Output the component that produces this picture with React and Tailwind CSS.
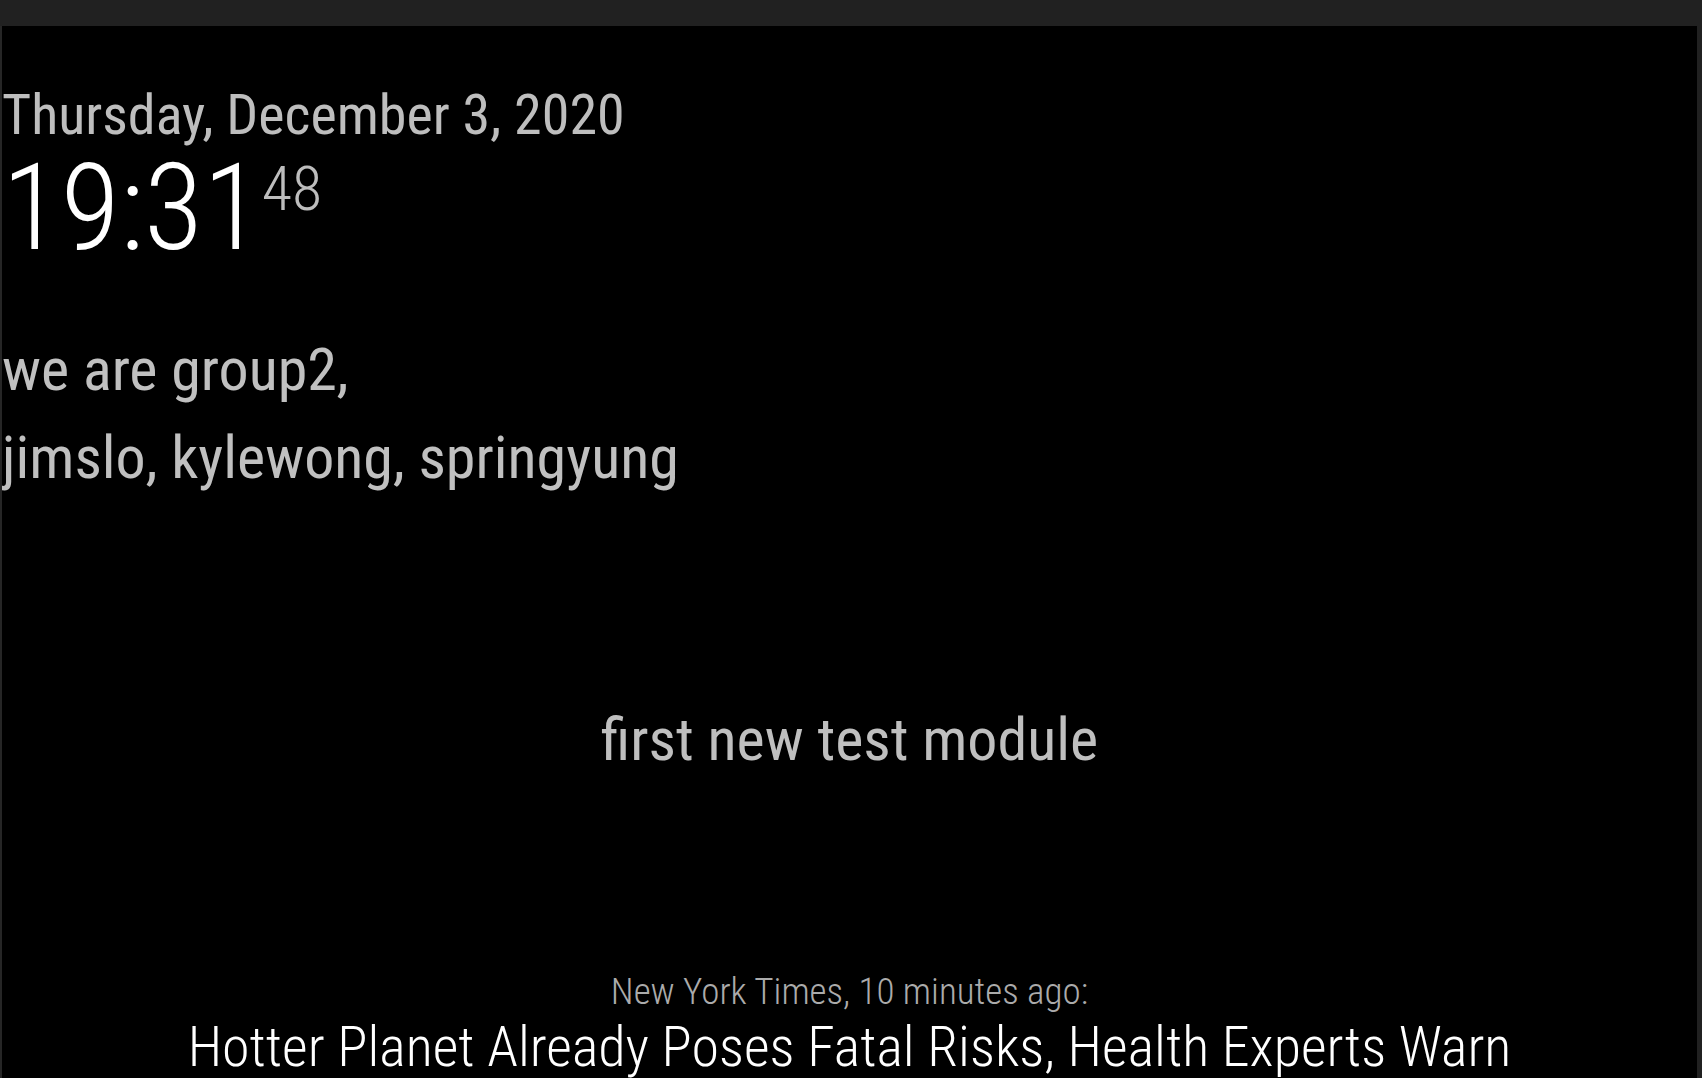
const font = { fontFamily: "'Roboto Condensed', Roboto, sans-serif" };

function Clock() {
  return (
    <div>
      <div className="text-[56px] leading-[65px] text-[#bebebe] whitespace-nowrap">Thursday, December 3, 2020</div>
      <div className="flex items-start whitespace-nowrap">
        <span className="text-[121px] leading-[121px] font-light text-white">19:31</span>
        <span className="mt-[10px] text-[62px] leading-[62px] font-light text-[#bdbdbd]">48</span>
      </div>
    </div>
  );
}

function HelloGroup() {
  return (
    <div className="mt-[57px] text-[60px] leading-[88px] text-[#c0c0c0] whitespace-nowrap">
      <div>we are group2,</div>
      <div>jimslo, kylewong, springyung</div>
    </div>
  );
}

function NewsFeed() {
  return (
    <div className="mt-[197px] text-center whitespace-nowrap">
      <div className="text-[37px] leading-[46px] font-light text-[#ababab]">New York Times, 10 minutes ago:</div>
      <div className="text-[56px] leading-[65px] font-light text-white">
        Hotter Planet Already Poses Fatal Risks, Health Experts Warn
      </div>
    </div>
  );
}

export default function App() {
  return (
    <div className="w-[1702px] h-[1078px] bg-[#212121] flex flex-col overflow-hidden" style={font}>
      <div className="h-[26px] shrink-0" />
      <div className="flex flex-1 min-h-0">
        <div className="w-[2px] shrink-0 bg-[#262626]" />
        <div className="flex-1 bg-black flex flex-col pt-[57px] overflow-hidden">
          <Clock />
          <HelloGroup />
          <div className="mt-[205px] text-center text-[60px] leading-[65px] text-[#bfbfbf] whitespace-nowrap">
            first new test module
          </div>
          <NewsFeed />
        </div>
        <div className="w-[5px] shrink-0 bg-[#212121]" />
      </div>
    </div>
  );
}
